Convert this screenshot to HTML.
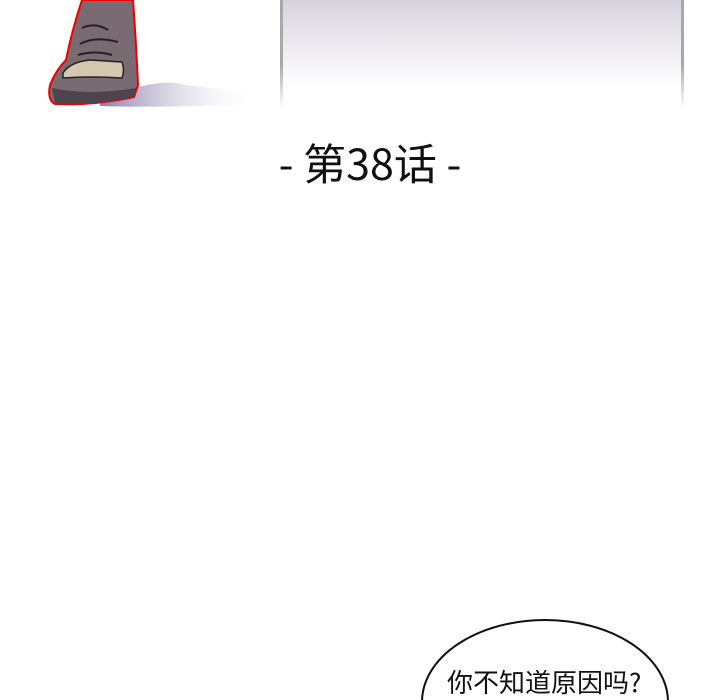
<!DOCTYPE html>
<html><head><meta charset="utf-8"><style>
html,body{margin:0;padding:0;background:#fff;width:720px;height:700px;overflow:hidden;position:relative;font-family:"Liberation Sans","Noto Sans CJK SC",sans-serif}
.panel{position:absolute;left:280px;top:0;width:404px;height:108px;background:linear-gradient(#d6d3dc 0%,#eceaef 40%,#fff 85%);border-left:3px solid #a8a8a8;border-right:3px solid #a8a8a8;box-sizing:border-box;-webkit-mask-image:linear-gradient(#000 60%,transparent 100%);mask-image:linear-gradient(#000 60%,transparent 100%)}
.title{position:absolute;left:0;width:740px;top:132px;text-align:center;font-size:43px;font-weight:400;color:#111;font-family:"Noto Sans CJK SC",sans-serif;line-height:60px}
.txt{position:absolute;left:447px;top:664px;font-size:26px;color:#111;font-family:"Noto Sans CJK SC",sans-serif;line-height:36px}
</style></head><body>
<div class="panel"></div>
<svg style="position:absolute;left:0;top:0" width="300" height="120">
<defs><linearGradient id="s" x1="0" x2="1"><stop offset="0" stop-color="#8c80a8"/><stop offset="1" stop-color="#fff" stop-opacity="0"/></linearGradient></defs>
<path d="M100 100 Q150 80 175 83 Q200 88 260 92 L260 104 Q160 108 100 106Z" fill="url(#s)"/>
<path d="M82 0 L133 0 Q136 40 138 85 L134 97 Q90 106 55 104 Q47 100 50 85 Q56 70 66 60 Q72 30 82 0Z" fill="#7a6a72" stroke="#e00" stroke-width="2"/>
<path d="M52 88 Q90 96 136 88 L134 97 Q90 106 55 104Z" fill="#4e4450"/>
<path d="M63 73 Q70 62 90 60 L122 62 Q125 70 122 78 Q90 76 63 78Z" fill="#d4c8b0" stroke="#222" stroke-width="1.5"/>
<path d="M78 55 Q95 50 112 55 M80 44 Q95 36 118 42 M82 28 Q95 22 108 30" stroke="#222" stroke-width="2" fill="none"/>
</svg>
<div class="title">- 第38话 -</div>
<svg style="position:absolute;left:0;top:0" width="720" height="700"><ellipse cx="545" cy="702" rx="123" ry="82" fill="#fff" stroke="#111" stroke-width="2"/></svg>
<div class="txt">你不知道原因吗?</div>
</body></html>
